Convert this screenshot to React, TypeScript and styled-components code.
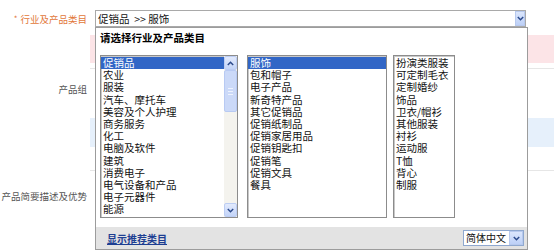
import styled, { createGlobalStyle } from "styled-components"

const GlobalStyle = createGlobalStyle`
  body {
    margin: 0;
    background: #fff;
    font-family: "Noto Sans CJK SC", "Liberation Sans", sans-serif;
  }
`

const industries = ["促销品", "农业", "服装", "汽车、摩托车", "美容及个人护理", "商务服务", "化工", "电脑及软件", "建筑", "消费电子", "电气设备和产品", "电子元器件", "能源"]
const promo = ["服饰", "包和帽子", "电子产品", "新奇特产品", "其它促销品", "促销纸制品", "促销家居用品", "促销钥匙扣", "促销笔", "促销文具", "餐具"]
const apparel = ["扮演类服装", "可定制毛衣", "定制婚纱", "饰品", "卫衣/帽衫", "其他服装", "衬衫", "运动服", "T恤", "背心", "制服"]

const Chevron = ({ up }: { up?: boolean }) => (
  <svg width="7" height="5" viewBox="0 0 7 5">
    <path d={up ? "M0.8 4 L3.5 1.3 L6.2 4" : "M0.8 1 L3.5 3.7 L6.2 1"} fill="none" stroke="#2b4a8c" strokeWidth="1.5" />
  </svg>
)

const App = () => {
  return (
    <>
      <GlobalStyle />
      <Page>
        <Row $h={35}>
          <Label $top={13} $orange>
            <Star>*</Star>行业及产品类目
          </Label>
          <Field $pad>
            <SelectBox>
              <SelectText>促销品&nbsp;&nbsp;&gt;&gt; 服饰</SelectText>
              <ArrowBtn $w={10}>
                <Chevron />
              </ArrowBtn>
              <Dropdown>
                <Title>请选择行业及产品类目</Title>
                <Lists>
                  <ListBox $w={138}>
                    <Items>
                      {industries.map((t, i) => (
                        <Item key={t} $selected={i === 0}>{t}</Item>
                      ))}
                    </Items>
                    <ScrollBar>
                      <ScrollBtn><Chevron up /></ScrollBtn>
                      <Thumb>
                        <Grip />
                        <Grip />
                        <Grip />
                      </Thumb>
                      <Track />
                      <ScrollBtn><Chevron /></ScrollBtn>
                    </ScrollBar>
                  </ListBox>
                  <ListBox $w={140} $ml={9}>
                    <Items>
                      {promo.map((t, i) => (
                        <Item key={t} $selected={i === 0}>{t}</Item>
                      ))}
                    </Items>
                  </ListBox>
                  <ListBox $w={62} $ml={6}>
                    <Items>
                      {apparel.map((t) => (
                        <Item key={t}>{t}</Item>
                      ))}
                    </Items>
                  </ListBox>
                </Lists>
                <Footer>
                  <FootLink>显示推荐类目</FootLink>
                  <LangSelect>
                    <LangText>简体中文</LangText>
                    <ArrowBtn $w={14}>
                      <Chevron />
                    </ArrowBtn>
                  </LangSelect>
                </Footer>
              </Dropdown>
            </SelectBox>
          </Field>
        </Row>
        <Row $h={28}>
          <Label />
          <Field $bg="#fce4e7" />
        </Row>
        <Row $h={5}>
          <Label />
          <Field />
        </Row>
        <Row $h={50}>
          <Label $top={15}>产品组</Label>
          <Field $line />
        </Row>
        <Row $h={29}>
          <Label />
          <Field $bg="#e6f0fb" />
        </Row>
        <Row $h={23}>
          <Label />
          <Field />
        </Row>
        <Row $h={80}>
          <Label $top={20}>
            <Star>*</Star>产品简要描述及优势
          </Label>
          <Field $line />
        </Row>
      </Page>
    </>
  )
}

export default App

const Page = styled.div`
width: 554px;
height: 250px;
overflow: hidden;
display: flex;
flex-direction: column;
`

const Row = styled.div<{ $h: number }>`
display: flex;
height: ${(p) => p.$h}px;
flex-shrink: 0;
`

const Label = styled.div<{ $top?: number; $orange?: boolean }>`
width: 87px;
padding-right: 3px;
padding-top: ${(p) => p.$top || 0}px;
display: flex;
justify-content: flex-end;
align-items: flex-start;
white-space: nowrap;
font-size: 9.5px;
line-height: 12px;
color: ${(p) => (p.$orange ? "#e2773a" : "#555")};
`

const Star = styled.span`
color: #e2773a;
margin-right: 3px;
font-size: 8px;
`

const Field = styled.div<{ $bg?: string; $line?: boolean; $pad?: boolean }>`
flex: 1;
background: ${(p) => p.$bg || "transparent"};
border-top: ${(p) => (p.$line ? "1px solid #e6e6e6" : "none")};
padding-left: ${(p) => (p.$pad ? 5 : 0)}px;
padding-top: ${(p) => (p.$pad ? 10 : 0)}px;
`

const SelectBox = styled.div`
position: relative;
width: 431px;
height: 17px;
box-sizing: border-box;
border: 1px solid #a9a9a9;
background: #fff;
display: flex;
align-items: center;
justify-content: space-between;
`

const SelectText = styled.span`
padding-left: 2px;
font-size: 10.5px;
color: #111;
line-height: 14px;
`

const ArrowBtn = styled.div<{ $w: number }>`
width: ${(p) => p.$w}px;
height: 100%;
box-sizing: border-box;
border: 1px solid #b7c9ee;
background: linear-gradient(#dbe6fc, #bdd0f7);
display: flex;
align-items: center;
justify-content: center;
`

const Dropdown = styled.div`
position: absolute;
top: 16px;
left: -1px;
width: 433px;
height: 223px;
box-sizing: border-box;
border: 1px solid #9c9c9c;
background: #fff;
z-index: 10;
display: flex;
flex-direction: column;
`

const Title = styled.div`
padding: 3px 0 0 4px;
font-size: 10.5px;
line-height: 14px;
font-weight: 700;
color: #000;
`

const Lists = styled.div`
display: flex;
margin-top: 10px;
padding-left: 4px;
`

const ListBox = styled.div<{ $w: number; $ml?: number }>`
width: ${(p) => p.$w}px;
height: 163px;
margin-left: ${(p) => p.$ml || 0}px;
box-sizing: border-box;
border: 1px solid #8c8c8c;
box-shadow: inset 1px 1px 0 #c8c8c8;
display: flex;
background: #fff;
`

const Items = styled.div`
flex: 1;
padding-top: 1px;
overflow: hidden;
`

const Item = styled.div<{ $selected?: boolean }>`
font-size: 10.5px;
line-height: 12.2px;
height: 12.2px;
padding-left: 2px;
white-space: nowrap;
color: ${(p) => (p.$selected ? "#fff" : "#111")};
background: ${(p) => (p.$selected ? "#3166c6" : "transparent")};
`

const ScrollBar = styled.div`
width: 13px;
display: flex;
flex-direction: column;
background: #f4f3ee;
`

const ScrollBtn = styled.div`
height: 14px;
box-sizing: border-box;
border: 1px solid #bccdf3;
border-radius: 2px;
background: linear-gradient(#e2eafd, #c3d4f8);
display: flex;
align-items: center;
justify-content: center;
`

const Thumb = styled.div`
height: 42px;
box-sizing: border-box;
border: 1px solid #b8caf3;
border-radius: 2px;
background: #cbd9f8;
display: flex;
flex-direction: column;
align-items: center;
justify-content: center;
gap: 2px;
`

const Grip = styled.div`
width: 5px;
height: 1px;
background: #eef3fe;
`

const Track = styled.div`
flex: 1;
`

const Footer = styled.div`
margin-top: auto;
height: 22px;
background: #e3e3e3;
display: flex;
align-items: center;
justify-content: space-between;
padding: 0 3px 0 11px;
`

const FootLink = styled.span`
font-size: 10px;
font-weight: 700;
color: #1d3e92;
text-decoration: underline;
`

const LangSelect = styled.div`
width: 61px;
height: 16px;
box-sizing: border-box;
border: 1px solid #8fa8cf;
background: #fff;
display: flex;
align-items: center;
justify-content: space-between;
`

const LangText = styled.span`
padding-left: 2px;
font-size: 10px;
line-height: 14px;
color: #111;
`
